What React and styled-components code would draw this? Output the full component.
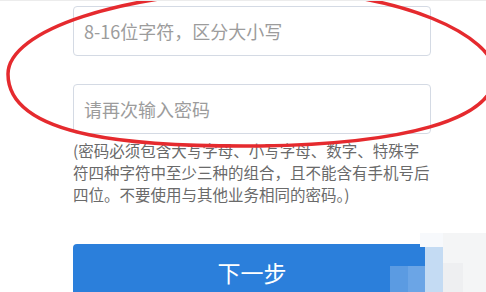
import React from "react";
import styled, { createGlobalStyle } from "styled-components";

const GlobalStyle = createGlobalStyle`
  html, body {
    margin: 0;
    padding: 0;
    background: #fff;
  }
  body {
    font-family: "Noto Sans CJK SC", "Liberation Sans", sans-serif;
  }
`;

const Page = styled.div`
  position: relative;
  width: 486px;
  height: 292px;
  overflow: hidden;
  border-top: 1px solid #ececec;
  box-sizing: border-box;
`;

const Form = styled.div`
  display: flex;
  flex-direction: column;
  width: 358px;
  margin-left: 73px;
  padding-top: 5px;
`;

const Field = styled.input`
  box-sizing: border-box;
  width: 100%;
  height: 50px;
  margin: 0;
  margin-top: ${p => (p.$gap ? p.$gap : 0)}px;
  padding: 0 10px;
  border: 1px solid #d4dae4;
  border-radius: 4px;
  background: #fff;
  font-family: inherit;
  font-size: 18px;
  color: #333;
  outline: none;
  &::placeholder {
    color: #9c9c9c;
  }
`;

const Hint = styled.p`
  margin: 5px 0 0;
  font-size: 15.5px;
  line-height: 22px;
  color: #6a6a6a;
`;

const NextButton = styled.button`
  box-sizing: border-box;
  width: 100%;
  height: 56px;
  margin-top: 39px;
  border: none;
  border-radius: 4px;
  background: #2b7fdb;
  color: #fff;
  font-family: inherit;
  font-size: 23px;
  letter-spacing: 0;
  cursor: pointer;
`;

const Annotation = styled.svg`
  position: absolute;
  left: 0;
  top: 0;
  pointer-events: none;
`;

const Watermark = styled.div`
  position: absolute;
  inset: 0;
  pointer-events: none;
`;

const Tile = styled.div`
  position: absolute;
  background: ${p => p.$color};
  opacity: ${p => p.$alpha || 1};
`;

const tiles = [
  { x: 420, y: 232, w: 30, h: 14, c: "#f7f9fc" },
  { x: 425, y: 246, w: 18, h: 46, c: "#c4dbf3" },
  { x: 443, y: 232, w: 43, h: 60, c: "#f4f5f6" },
  { x: 443, y: 262, w: 20, h: 30, c: "#eeeff1" },
  { x: 390, y: 265, w: 18, h: 27, c: "#5b9be2" },
  { x: 408, y: 265, w: 17, h: 27, c: "#6ba5e6" }
];

export default function App() {
  return (
    <>
      <GlobalStyle />
      <Page>
        <Form>
          <Field type="password" placeholder="8-16位字符，区分大小写" />
          <Field type="password" $gap={28} placeholder="请再次输入密码" />
          <Hint>
            (密码必须包含大写字母、小写字母、数字、特殊字符四种字符中至少三种的组合，且不能含有手机号后四位。不要使用与其他业务相同的密码。)
          </Hint>
          <NextButton>下一步</NextButton>
        </Form>
        <Watermark>
          {tiles.map((t, i) => (
            <Tile
              key={i}
              $color={t.c}
              style={{ left: t.x, top: t.y, width: t.w, height: t.h }}
            />
          ))}
        </Watermark>
        <Annotation width="486" height="292" viewBox="0 0 486 292">
          <path
            d="M 8 73 C 8 30 120 -10 275 -10 C 400 -10 495 35 495 73 C 495 120 400 143 260 145 C 140 146 8 138 8 73 Z"
            fill="none"
            stroke="#e52a2e"
            strokeWidth="3.5"
          />
        </Annotation>
      </Page>
    </>
  );
}
